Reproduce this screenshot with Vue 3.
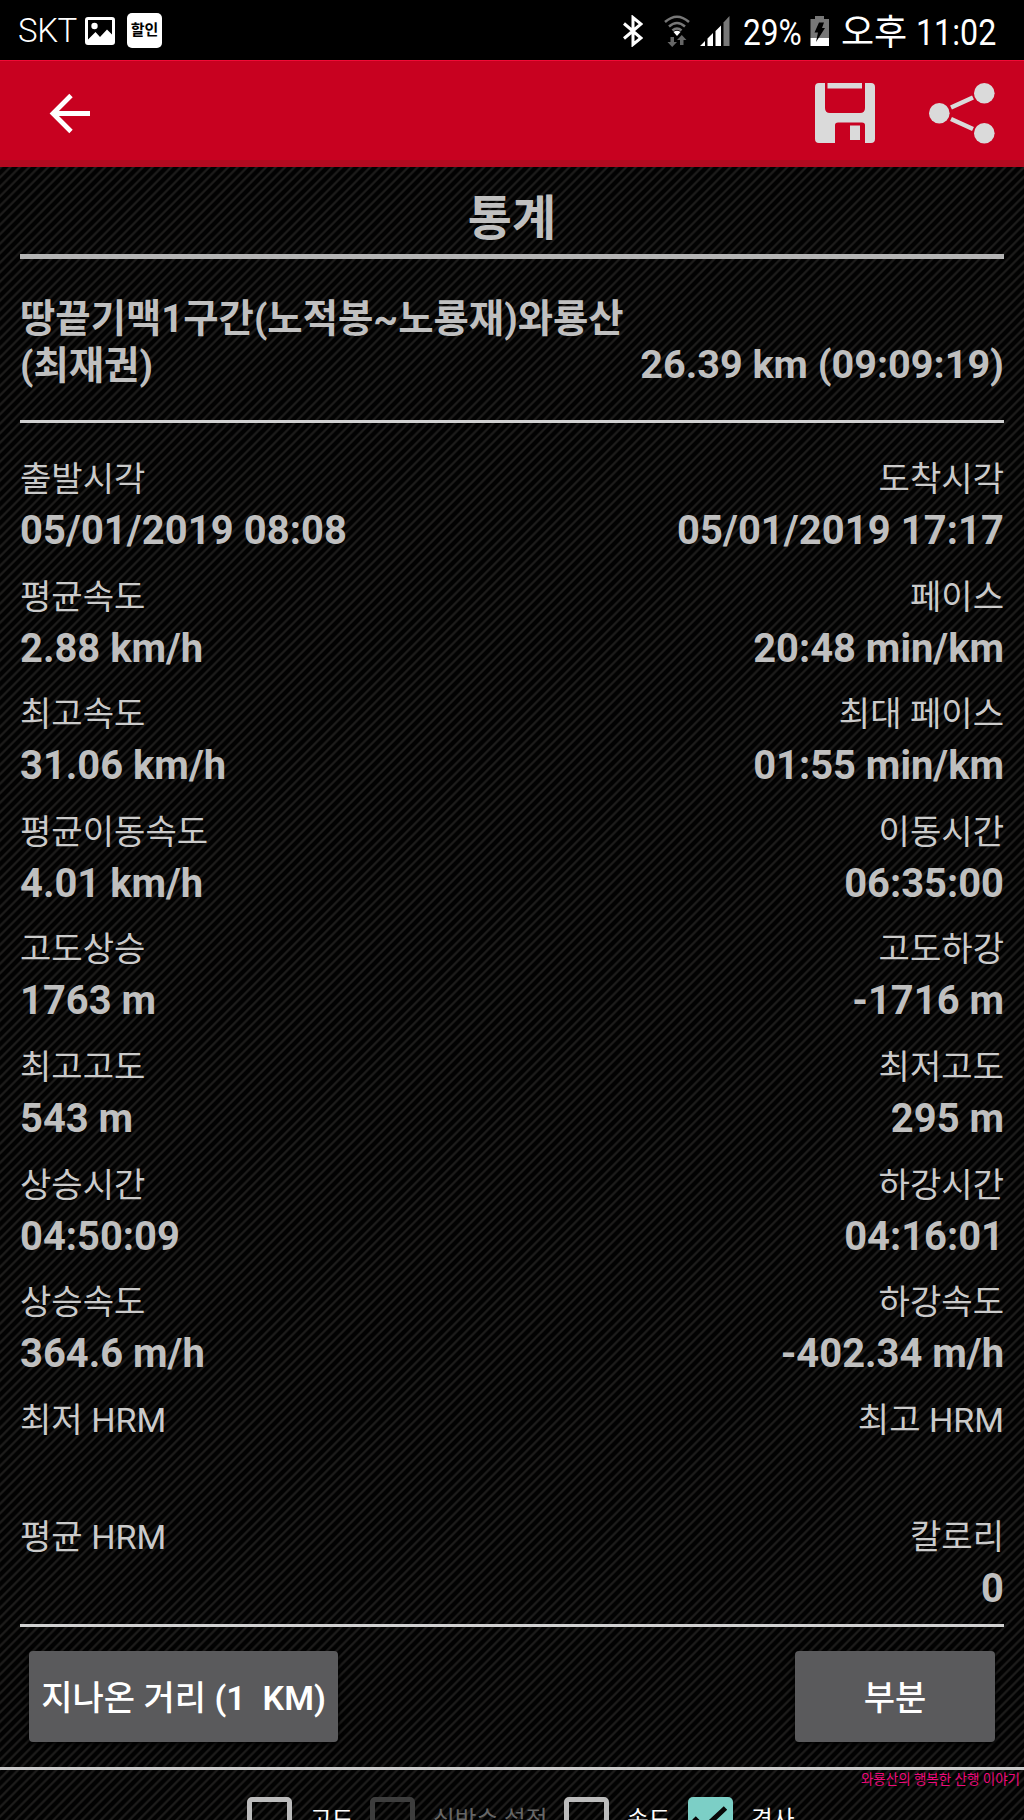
<script setup>
const rows = [
  ['출발시각', '05/01/2019 08:08', '도착시각', '05/01/2019 17:17'],
  ['평균속도', '2.88 km/h', '페이스', '20:48 min/km'],
  ['최고속도', '31.06 km/h', '최대 페이스', '01:55 min/km'],
  ['평균이동속도', '4.01 km/h', '이동시간', '06:35:00'],
  ['고도상승', '1763 m', '고도하강', '-1716 m'],
  ['최고고도', '543 m', '최저고도', '295 m'],
  ['상승시간', '04:50:09', '하강시간', '04:16:01'],
  ['상승속도', '364.6 m/h', '하강속도', '-402.34 m/h'],
  ['최저 HRM', '', '최고 HRM', ''],
  ['평균 HRM', '', '칼로리', '0'],
]
</script>

<template>
  <div class="screen">
    <div class="status">
      <span class="carrier">SKT</span>
      <svg class="pic" width="30" height="28" viewBox="0 0 30 28">
        <path fill="#fff" fill-rule="evenodd" d="M3 0H27Q30 0 30 3V25Q30 28 27 28H3Q0 28 0 25V3Q0 0 3 0ZM3 3V22.500L10.500 15L15 20L22 12.500L27 17.500V3Z" />
        <circle cx="9.500" cy="9" r="3.200" fill="#fff" />
      </svg>
      <span class="sale">할인</span>
      <span class="grow"></span>
      <svg class="bt" width="20" height="32" viewBox="0 0 20 32" fill="none" stroke="#fff" stroke-width="3">
        <path d="M1 8.500L18 23L10 29.500V2.500L18 9L1 23.500" />
      </svg>
      <svg class="wifi" width="26" height="32" viewBox="0 0 26 32" fill="none" stroke="#777" stroke-width="2.500">
        <path d="M1 7Q13 -3.500 25 7M5 11.500Q13 4.500 21 11.500M8.500 15.500Q13 11.500 17.500 15.500" />
        <path d="M13 21L9.500 17Q13 14.500 16.500 17Z" fill="#fff" stroke="none" />
        <path d="M6.500 22H10V27H13L8.200 32L3.500 27H6.500ZM16 30H19.500V25H22.500L17.800 20L13 25H16Z" fill="#666" stroke="none" />
      </svg>
      <svg class="signal" width="30" height="30" viewBox="0 0 30 30" fill="#fff">
        <path d="M0 30L5 25V30ZM7.500 22.500L13 17V30H7.500ZM15.500 15L21 9.500V30H15.500Z" />
        <path d="M23.500 6.500L29.500 0V30H23.500Z" fill="#777" />
      </svg>
      <span class="pct">29%</span>
      <svg class="bat" width="20" height="30" viewBox="0 0 20 30">
        <path fill="#777" d="M5 0H14V3H19V22H.500V3H5Z" />
        <path fill="#fff" d="M.500 22H19V30H.500Z" />
        <path fill="#000" d="M9 6.500H14L12 12H15L6 26L8 16.500H4.500Z" />
      </svg>
      <span class="pm">오후</span>
      <span class="clock">11:02</span>
    </div>

    <div class="bar">
      <svg class="back" width="42" height="42" viewBox="0 0 42 42" fill="none" stroke="#fff" stroke-width="4.800">
        <path d="M22 2.500L4 20.500L22 38.500M3 20.500H41" />
      </svg>
      <span class="grow"></span>
      <svg class="save" width="60" height="60" viewBox="0 0 60 60" fill="#dadada">
        <path d="M4 0H10V25Q10 30 15 30H45Q50 30 50 25V0H56Q60 0 60 4V56Q60 60 56 60H50V42Q50 39.500 47 39.500H23Q20 39.500 20 42V60H4Q0 60 0 56V4Q0 0 4 0Z" />
        <path d="M12.500 0H47V5.500H12.500ZM35 42.500H45V57H35Z" />
      </svg>
      <svg class="share" width="66" height="61" viewBox="0 0 66 61" fill="#dadada" stroke="#dadada">
        <g stroke="none"><circle cx="10.300" cy="30.300" r="10.300" /><circle cx="55.300" cy="10.300" r="10.300" /><circle cx="55.300" cy="50.300" r="10.300" /></g>
        <path d="M22 24.500L44 14.500M22 36L44 46" stroke-width="4.500" />
      </svg>
    </div>

    <div class="content">
      <h1>통계</h1>
      <div class="head">
        <div class="name">땅끝기맥1구간(노적봉~노룡재)와룡산<br>(최재권)</div>
        <div class="total">26.39 km (09:09:19)</div>
      </div>
      <div class="stats">
        <div v-for="(r, i) in rows" :key="r[0]" class="row" :class="{ dates: i === 0 }">
          <div class="cell"><span class="label">{{ r[0] }}</span><span class="value">{{ r[1] }}</span></div>
          <div class="cell right"><span class="label">{{ r[2] }}</span><span class="value">{{ r[3] }}</span></div>
        </div>
      </div>
      <div class="buttons">
        <button class="dist">지나온 거리 <b>(1&nbsp; KM)</b></button>
        <button class="part">부분</button>
      </div>
    </div>

    <div class="footer">
      <span class="mark">와룡산의 행복한 산행 이야기</span>
      <div class="check c1"><i></i><span>고도</span></div>
      <div class="check c2 off"><i></i><span>심박수 설정</span></div>
      <div class="check c3"><i></i><span>속도</span></div>
      <div class="check c4 on">
        <i><svg width="45" height="45" viewBox="0 0 45 45" fill="none" stroke="#080808" stroke-width="5"><path d="M6 21L16 31L37.500 11" /></svg></i>
        <span>경사</span>
      </div>
    </div>
  </div>
</template>

<style>
body { background: #000; }
</style>

<style scoped>
* { box-sizing: border-box; }
.screen {
  width: 1024px; height: 1820px; overflow: hidden; display: flex; flex-direction: column;
  font-family: Roboto, "Noto Sans CJK JP", sans-serif; color: #bfbfbf;
  background: repeating-linear-gradient(135deg, #020202 0, #020202 3px, #1d1c1b 4.400px, #1d1c1b 5.300px, #020202 6.700px);
}
.grow { flex: 1; }
.status { height: 60px; flex: none; background: #000; color: #fff; display: flex; align-items: flex-start; white-space: nowrap; }
.carrier { font-size: 33px; line-height: 40px; margin: 11px 0 0 18px; width: 67px; font-weight: 350; letter-spacing: -.4px; }
.pic { margin-top: 17px; }
.sale { width: 35px; height: 35px; margin: 13px 0 0 12px; border-radius: 5px; background: #fff; color: #000; font-size: 15px; line-height: 34px; font-weight: 700; text-align: center; }
.bt { margin: 15px 21px 0 0; }
.wifi { margin: 15px 10px 0 0; }
.signal { margin: 16px 13px 0 0; }
.pct { font-size: 36px; line-height: 42px; margin-top: 12px; width: 67px; transform: scaleX(.88); transform-origin: 0 0; }
.bat { margin-top: 16px; }
.pm { font-size: 36px; line-height: 42px; margin: 12px 0 0 11px; width: 75px; }
.clock { font-size: 36px; line-height: 42px; margin-top: 12px; width: 108px; transform: scaleX(.895); transform-origin: 0 0; }
.bar { height: 107px; flex: none; display: flex; padding: 22px 29px 0 49px; background: #c80120; border-top: 1px solid #f00a35; box-shadow: inset 0 -7px #b20a20; }
.back { margin-top: 10px; }
.save { margin-right: 54px; }
.content { height: 1600px; flex: none; padding: 0 20px; }
h1 { margin: 0; height: 92px; font-size: 48px; line-height: 104px; text-align: center; font-weight: 700; border-bottom: 5px solid #b4b4b4; }
.head { height: 164px; padding-top: 36px; border-bottom: 3px solid #d0d0d0; font-size: 38.400px; line-height: 47px; }
.name { font-weight: 700; }
.total { text-align: right; margin-top: -48px; font-size: 39.600px; font-weight: 700; }
.stats { height: 1204px; padding-top: 31px; border-bottom: 3px solid #d0d0d0; }
.row { height: 117.600px; display: flex; justify-content: space-between; }
.dates .value { font-kerning: none; letter-spacing: .1px; }
.cell { display: flex; flex-direction: column; white-space: nowrap; }
.right { align-items: flex-end; }
.label { font-size: 34.100px; line-height: 51px; color: #cacaca; }
.value { font-size: 39.900px; line-height: 52px; font-weight: 700; }
.buttons { display: flex; justify-content: space-between; padding: 24px 9px 0; }
button { height: 91px; border: 0; border-radius: 4px; background: #5a5a5c; color: #fff; font: 500 34px Roboto, "Noto Sans CJK JP", sans-serif; padding: 0 0 2px; box-shadow: 0 2px 5px #000; white-space: nowrap; }
.dist { width: 309px; }
.dist b { font-weight: 600; }
.part { width: 200px; }
.footer { height: 53px; flex: none; position: relative; border-top: 3px solid #c8c8c8; display: flex; padding: 27px 0 0 247px; }
.mark { position: absolute; right: 4px; top: 0; color: #f0087c; font-size: 13.500px; line-height: 18px; }
.check { height: 45px; display: flex; flex: none; white-space: nowrap; font-size: 23.600px; color: #fff; }
.check i { width: 45px; height: 45px; border: 5px solid #bbb; border-radius: 5px; flex: none; }
.check span { margin-left: 18px; line-height: 46px; }
.c1 { width: 123px; } .c2 { width: 194px; } .c3 { width: 124px; }
.off { color: #666; } .off i { border-color: #3d3d3d; }
.on i { border: 0; background: #7ccfc6; }
</style>
